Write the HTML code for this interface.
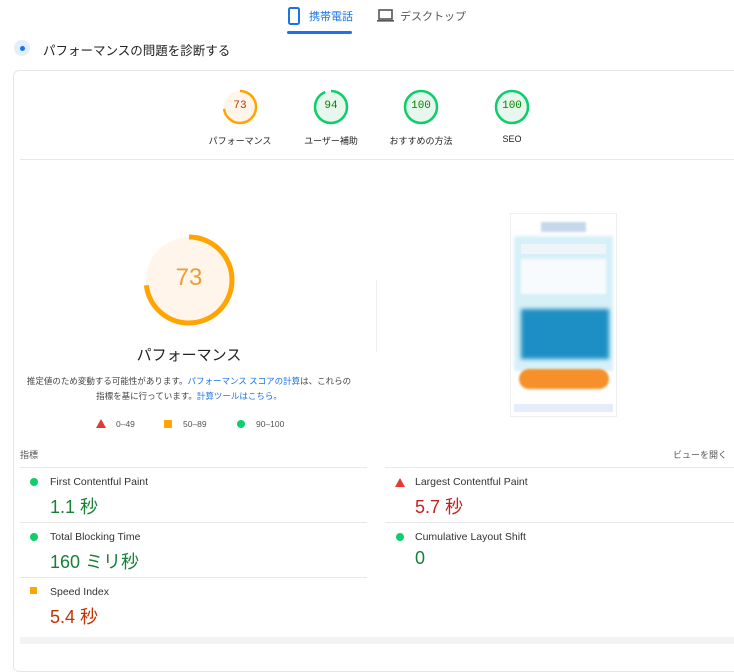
<!DOCTYPE html><html><head><meta charset="utf-8"><style>
body{margin:0;width:734px;height:644px;overflow:hidden;background:#fff;font-family:"Liberation Sans","Noto Sans CJK JP",sans-serif;color:#202124;position:relative}
.a{position:absolute;white-space:nowrap}
.lbl{font-size:9px;transform:translateX(-50%)}
.line{position:absolute;height:1px;background:#e8e8e8}
.dot{position:absolute;width:8px;height:8px;border-radius:50%;background:#0cce6b}
.mt{font-size:10.5px;color:#333}
.mv{font-size:18px}
</style></head><body>
<svg class="a" style="left:287px;top:7px" width="16" height="18"><rect x="2" y="1" width="10" height="16" rx="1.5" fill="none" stroke="#1a73e8" stroke-width="2"/></svg>
<div class="a" style="left:309px;top:8px;font-size:11px;color:#1a73e8">携帯電話</div>
<div class="a" style="left:287px;top:31px;width:65px;height:3px;background:#1a73e8;border-radius:2px"></div>
<svg class="a" style="left:376px;top:8px" width="20" height="16"><rect x="3" y="2" width="13" height="9" fill="none" stroke="#555" stroke-width="1.6"/><rect x="1" y="12" width="17" height="1.6" fill="#555"/></svg>
<div class="a" style="left:400px;top:8px;font-size:11px;color:#555">デスクトップ</div>
<div class="a" style="left:14px;top:40px;width:16px;height:16px;border-radius:50%;background:#e3eefc"></div>
<div class="a" style="left:20px;top:46px;width:5px;height:5px;border-radius:50%;background:#1a73e8"></div>
<div class="a" style="left:43px;top:40px;font-size:12.5px">パフォーマンスの問題を診断する</div>
<div class="a" style="left:13px;top:70px;width:740px;height:600px;border:1px solid #e6e6e6;border-radius:6px"></div>
<svg class="a" style="left:0;top:0" width="734" height="644">
<circle cx="240" cy="107" r="16" fill="#fff5ea"/><circle cx="240" cy="107" r="16" fill="none" stroke="#ffa400" stroke-width="2.5" stroke-dasharray="73.4 100" transform="rotate(-90 240 107)"/>
<circle cx="331" cy="107" r="16" fill="#e8f7ee"/><circle cx="331" cy="107" r="16" fill="none" stroke="#0cce6b" stroke-width="2.5" stroke-dasharray="94.5 100" transform="rotate(-90 331 107)"/>
<circle cx="421" cy="107" r="16" fill="#e8f7ee" stroke="#0cce6b" stroke-width="2.5"/>
<circle cx="512" cy="107" r="16" fill="#e8f7ee" stroke="#0cce6b" stroke-width="2.5"/>
<circle cx="189" cy="280" r="43" fill="#fff5ea"/><circle cx="189" cy="280" r="43" fill="none" stroke="#ffa400" stroke-width="5" stroke-dasharray="197 300" transform="rotate(-90 189 280)"/>
<polygon points="101,419 96,428 106,428" fill="#e53935"/>
<rect x="164" y="420" width="8" height="8" fill="#ffa400"/>
<circle cx="241" cy="424" r="4" fill="#0cce6b"/>
<polygon points="400,478 395,487 405,487" fill="#e53935"/>
<rect x="30" y="587" width="7" height="7" fill="#ffa400"/>
</svg>
<div class="a" style="left:223px;top:100px;width:34px;text-align:center;font-family:'Liberation Mono',monospace;font-size:11px;color:#c33300">73</div>
<div class="a" style="left:314px;top:100px;width:34px;text-align:center;font-family:'Liberation Mono',monospace;font-size:11px;color:#080">94</div>
<div class="a" style="left:404px;top:100px;width:34px;text-align:center;font-family:'Liberation Mono',monospace;font-size:11px;color:#080">100</div>
<div class="a" style="left:495px;top:100px;width:34px;text-align:center;font-family:'Liberation Mono',monospace;font-size:11px;color:#080">100</div>
<div class="a lbl" style="left:240px;top:134px">パフォーマンス</div>
<div class="a lbl" style="left:331px;top:134px">ユーザー補助</div>
<div class="a lbl" style="left:421px;top:134px">おすすめの方法</div>
<div class="a lbl" style="left:512px;top:134px">SEO</div>
<div class="line" style="left:20px;top:159px;width:714px"></div>
<div class="a" style="left:150px;top:264px;width:78px;text-align:center;font-size:24px;color:#e8a034">73</div>
<div class="a" style="left:189px;top:344px;font-size:15px;transform:translateX(-50%)">パフォーマンス</div>
<div class="a" style="left:24px;top:374px;width:330px;text-align:center;font-size:8.5px;line-height:15px;color:#444;white-space:normal">推定値のため変動する可能性があります。<span style="color:#1a73e8">パフォーマンス スコアの計算</span>は、これらの指標を基に行っています。<span style="color:#1a73e8">計算ツールはこちら。</span></div>
<div class="a" style="left:116px;top:419px;font-size:8.5px;color:#555">0–49</div>
<div class="a" style="left:183px;top:419px;font-size:8.5px;color:#555">50–89</div>
<div class="a" style="left:256px;top:419px;font-size:8.5px;color:#555">90–100</div>
<div class="a" style="left:376px;top:280px;width:1px;height:72px;background:#eee"></div>
<div class="a" style="left:510px;top:213px;width:105px;height:202px;border:1px solid #eee;background:#fff">
<div style="position:absolute;left:30px;top:8px;width:45px;height:10px;background:#c7d8ec;filter:blur(1px)"></div>
<div style="position:absolute;left:3px;top:22px;width:99px;height:135px;background:#d6f0f8;filter:blur(1.5px)"></div>
<div style="position:absolute;left:10px;top:30px;width:85px;height:10px;background:#eef4f8"></div>
<div style="position:absolute;left:10px;top:45px;width:85px;height:35px;background:#f7fbfd;filter:blur(1px)"></div>
<div style="position:absolute;left:10px;top:95px;width:88px;height:50px;background:#1e8fc4;filter:blur(2px)"></div>
<div style="position:absolute;left:8px;top:155px;width:90px;height:20px;border-radius:10px;background:#f5902a;filter:blur(1px)"></div>
<div style="position:absolute;left:3px;top:190px;width:99px;height:8px;background:#e3eefa"></div>
</div>
<div class="a" style="left:20px;top:448px;font-size:9px;color:#555">指標</div>
<div class="a" style="right:7px;top:448px;font-size:9px;color:#555">ビューを開く</div>
<div class="line" style="left:20px;top:467px;width:347px"></div><div class="line" style="left:385px;top:467px;width:349px"></div>
<div class="line" style="left:20px;top:522px;width:347px"></div><div class="line" style="left:385px;top:522px;width:349px"></div>
<div class="line" style="left:20px;top:577px;width:347px"></div>
<div class="dot" style="left:30px;top:478px"></div>
<div class="a mt" style="left:50px;top:476px">First Contentful Paint</div>
<div class="a mv" style="left:50px;top:493px;color:#188038">1.1 秒</div>
<div class="a mt" style="left:415px;top:476px">Largest Contentful Paint</div>
<div class="a mv" style="left:415px;top:493px;color:#c5221f">5.7 秒</div>
<div class="dot" style="left:30px;top:533px"></div>
<div class="a mt" style="left:50px;top:531px">Total Blocking Time</div>
<div class="a mv" style="left:50px;top:548px;color:#188038">160 ミリ秒</div>
<div class="dot" style="left:396px;top:533px"></div>
<div class="a mt" style="left:415px;top:531px">Cumulative Layout Shift</div>
<div class="a mv" style="left:415px;top:548px;color:#188038">0</div>
<div class="a mt" style="left:50px;top:586px">Speed Index</div>
<div class="a mv" style="left:50px;top:603px;color:#c33300">5.4 秒</div>
<div class="a" style="left:20px;top:637px;width:714px;height:7px;background:#f3f3f3"></div>
</body></html>
